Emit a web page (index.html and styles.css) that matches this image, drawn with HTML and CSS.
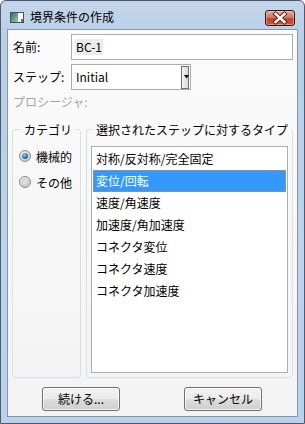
FILE: index.html
```html
<!DOCTYPE html>
<html lang="ja">
<head>
<meta charset="utf-8">
<title>境界条件の作成</title>
<link rel="stylesheet" href="styles.css">
</head>
<body>
<div class="window">
  <div class="titlebar">
    <svg class="app-icon" width="14" height="11" viewBox="0 0 14 11">
      <defs>
        <linearGradient id="ig" x1="0" y1="0" x2="1" y2="1">
          <stop offset="0" stop-color="#2f6f6a"/>
          <stop offset="1" stop-color="#8fd0a0"/>
        </linearGradient>
      </defs>
      <rect x="0.5" y="0.5" width="13" height="10" fill="#ffffff" stroke="#4a4f57"/>
      <rect x="1" y="1" width="7" height="9" fill="url(#ig)"/>
      <rect x="11" y="7" width="2" height="3" fill="#3a78c8"/>
    </svg>
    <span class="title">境界条件の作成</span>
    <div class="close">
      <svg width="30" height="16" viewBox="0 0 30 16">
        <path d="M10.5 4 L19.5 12 M19.5 4 L10.5 12" stroke="#5a1a10" stroke-width="4.2" stroke-linecap="square"/>
        <path d="M10.5 4 L19.5 12 M19.5 4 L10.5 12" stroke="#ffffff" stroke-width="2.4" stroke-linecap="square"/>
      </svg>
    </div>
  </div>
  <div class="client">
    <div class="row">
      <span class="label">名前:</span>
      <div class="input"><span class="sel">BC-1</span></div>
    </div>
    <div class="row row-step">
      <span class="label">ステップ:</span>
      <div class="combo">
        <span class="combo-text">Initial</span>
        <div class="combo-btn">
          <svg width="5" height="4" viewBox="0 0 5 4"><path d="M0 0 H5 L2.5 3.5 Z" fill="#000"/></svg>
        </div>
      </div>
    </div>
    <div class="proc">プロシージャ:</div>
    <div class="groups">
      <fieldset class="group group-cat">
        <legend>カテゴリ</legend>
        <div class="radios">
          <div class="radio-row">
            <svg class="radio" width="12" height="12" viewBox="0 0 12 12">
              <defs>
                <radialGradient id="rg1" cx="0.4" cy="0.35" r="0.7">
                  <stop offset="0" stop-color="#f4f4f4"/>
                  <stop offset="1" stop-color="#c9c9c9"/>
                </radialGradient>
                <radialGradient id="dot" cx="0.4" cy="0.35" r="0.7">
                  <stop offset="0" stop-color="#9fd7f7"/>
                  <stop offset="0.6" stop-color="#2a7fc0"/>
                  <stop offset="1" stop-color="#134a78"/>
                </radialGradient>
              </defs>
              <circle cx="6" cy="6" r="5.5" fill="url(#rg1)" stroke="#8b8b8b"/>
              <circle cx="6" cy="6" r="3" fill="url(#dot)"/>
            </svg>
            <span>機械的</span>
          </div>
          <div class="radio-row">
            <svg class="radio" width="12" height="12" viewBox="0 0 12 12">
              <circle cx="6" cy="6" r="5.5" fill="url(#rg1)" stroke="#8b8b8b"/>
              <circle cx="6" cy="6" r="3.2" fill="#dcdcdc" stroke="#bdbdbd" stroke-width="0.6"/>
            </svg>
            <span>その他</span>
          </div>
        </div>
      </fieldset>
      <fieldset class="group group-type">
        <legend>選択されたステップに対するタイプ</legend>
        <div class="list">
          <div class="item">対称/反対称/完全固定</div>
          <div class="item selected">変位/回転</div>
          <div class="item">速度/角速度</div>
          <div class="item">加速度/角加速度</div>
          <div class="item">コネクタ変位</div>
          <div class="item">コネクタ速度</div>
          <div class="item">コネクタ加速度</div>
        </div>
      </fieldset>
    </div>
    <div class="buttons">
      <button class="btn">続ける...</button>
      <button class="btn">キャンセル</button>
    </div>
  </div>
</div>
</body>
</html>
```

FILE: styles.css
```css
* { box-sizing: border-box; }
html, body {
  margin: 0;
  padding: 0;
  background: #ffffff;
}
body {
  font-family: "Noto Sans CJK JP", "Noto Sans", sans-serif;
  font-size: 12px;
  color: #000;
}
.window {
  width: 305px;
  height: 424px;
  border: 1px solid #4d5a6b;
  border-radius: 6px 6px 0 0;
  background: linear-gradient(180deg, #c3d5ea 0%, #b8cfe9 10%, #bcd3ee 60%, #b9d1ec 100%);
  padding: 0 6px 6px 6px;
  display: flex;
  flex-direction: column;
}
.titlebar {
  height: 28px;
  display: flex;
  align-items: center;
  padding: 3px 0 0 3px;
}
.app-icon {
  flex: none;
  margin-top: 1px;
}
.title {
  margin-left: 6px;
  line-height: 16px;
  color: #000;
  flex: 1;
}
.close {
  width: 30px;
  height: 16px;
  margin-right: 3px;
  margin-top: 3px;
  border: 1px solid #3a1410;
  border-radius: 3px;
  background: linear-gradient(180deg, #e3a89b 0%, #d27a68 45%, #c2412f 55%, #cc5b3e 100%);
  box-shadow: inset 0 0 0 1px rgba(255,255,255,0.35);
  display: flex;
  align-items: center;
  justify-content: center;
  overflow: hidden;
}
.close svg { flex: none; }
.client {
  flex: 1;
  border: 1px solid #8597ae;
  background: linear-gradient(180deg, #fbfbfb 0%, #f3f3f3 100%);
  padding: 4px 4px 0 4px;
  display: flex;
  flex-direction: column;
}
.row {
  display: flex;
  height: 26px;
  align-items: center;
}
.row-step { margin-top: 4px; }
.label {
  width: 58px;
  margin-left: 1px;
  line-height: 16px;
}
.input {
  flex: 1;
  height: 26px;
  border: 1px solid #abadb3;
  background: #fff;
  display: flex;
  align-items: center;
  padding-left: 3px;
}
.sel {
  background: #ececec;
  line-height: 16px;
  padding: 0 1px;
}
.combo {
  width: 120px;
  height: 26px;
  border: 1px solid #abadb3;
  background: #fff;
  display: flex;
  align-items: center;
  padding-left: 4px;
}
.combo-text {
  flex: 1;
  line-height: 16px;
}
.combo-btn {
  width: 8px;
  height: 23px;
  margin-right: 1px;
  border: 1px solid #707070;
  background: linear-gradient(90deg, #f4f4f4 0%, #d8d8d8 100%);
  display: flex;
  justify-content: flex-end;
  align-items: flex-start;
  padding-top: 8px;
}
.combo-btn svg { flex: none; margin-right: -1px; }
.proc {
  height: 24px;
  line-height: 24px;
  margin-left: 1px;
  color: #a3a3a3;
}
.groups {
  margin-top: 7px;
  height: 257px;
  display: flex;
  gap: 5px;
  margin-right: 1px;
}
.group {
  margin: 0;
  padding: 0;
  border: 1px solid #d5dfe5;
  border-radius: 3px;
  height: 257px;
  min-width: 0;
}
.group legend {
  line-height: 17px;
  padding: 0 3px;
}
.group-cat {
  width: 69px;
  flex: none;
}
.group-cat legend { margin-left: 8px; }
.group-type {
  width: 207px;
  flex: none;
}
.group-type legend { margin-left: 6px; }
.radios {
  padding-top: 5px;
}
.radio-row {
  height: 26px;
  display: flex;
  align-items: center;
  padding-left: 6px;
}
.radio {
  flex: none;
  margin-right: 5px;
}
.list {
  margin: 8px 4px 0 4px;
  height: 227px;
  border: 1px solid #abadb3;
  background: #fff;
  padding: 1px;
}
.item {
  height: 22px;
  line-height: 22px;
  padding-left: 3px;
  white-space: nowrap;
}
.item.selected {
  background: #3399ff;
  color: #fff;
  outline: 1px dotted #e08a3a;
  outline-offset: -1px;
}
.buttons {
  display: flex;
  margin-top: 9px;
  padding-left: 30px;
  gap: 64px;
}
.btn {
  width: 78px;
  height: 24px;
  border: 1px solid #707070;
  border-radius: 3px;
  background: linear-gradient(180deg, #f2f2f2 0%, #ebebeb 50%, #dddddd 51%, #cfcfcf 100%);
  box-shadow: inset 0 0 0 1px rgba(255,255,255,0.7);
  font-family: "Noto Sans CJK JP", "Noto Sans", sans-serif;
  font-size: 12px;
  color: #000;
  padding: 0;
  line-height: 20px;
}
```
